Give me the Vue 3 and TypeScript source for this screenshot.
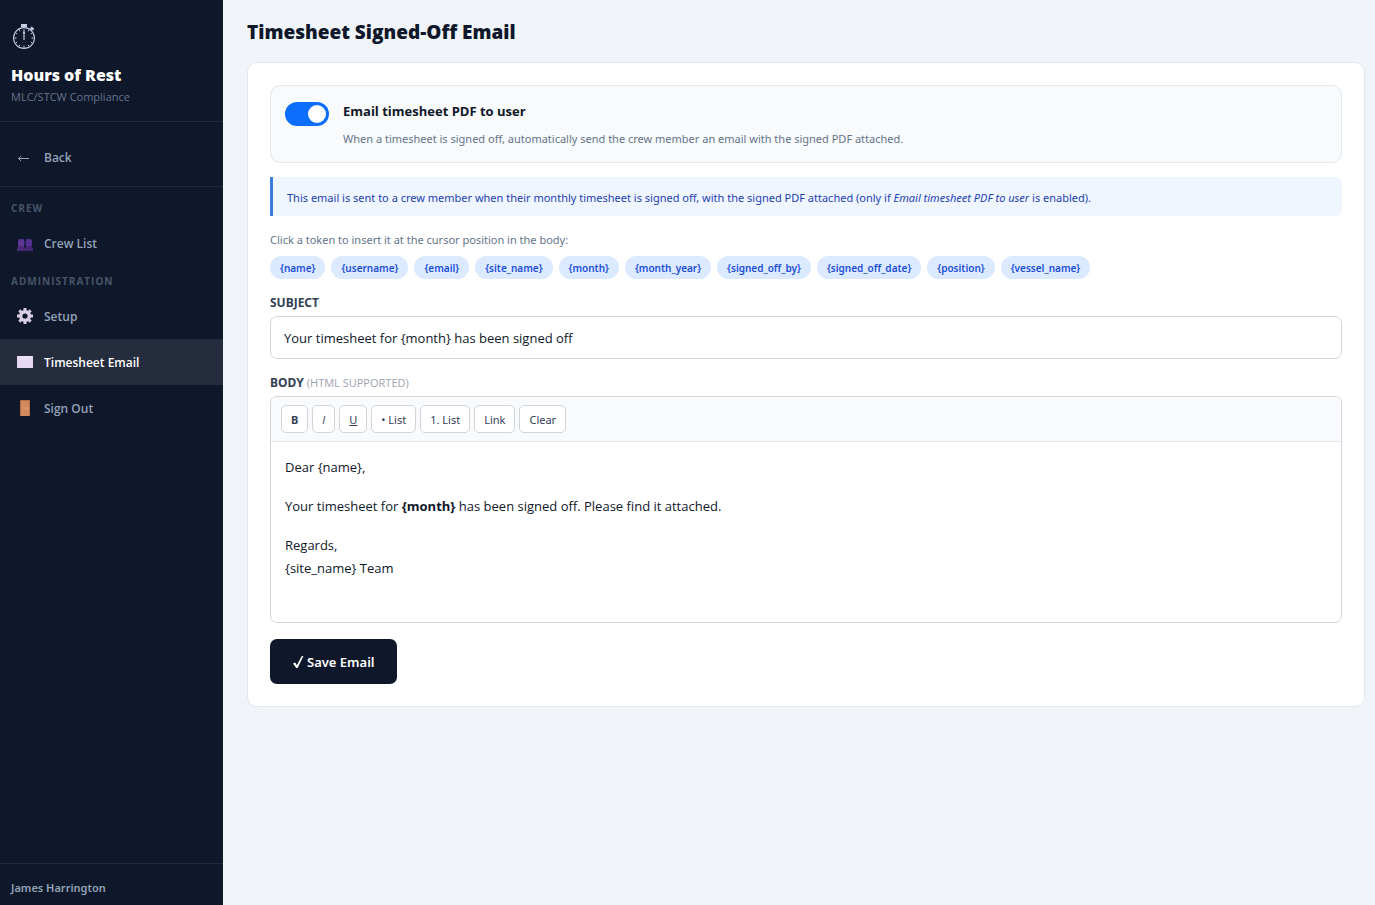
<script setup lang="ts">
import { ref } from 'vue'

interface Tool {
  label: string
  title: string
  command: string
  kind?: string
}

const sendPdf = ref(true)
const subject = ref('Your timesheet for {month} has been signed off')
const editor = ref<HTMLElement | null>(null)

const tokens: string[] = [
  '{name}',
  '{username}',
  '{email}',
  '{site_name}',
  '{month}',
  '{month_year}',
  '{signed_off_by}',
  '{signed_off_date}',
  '{position}',
  '{vessel_name}',
]

const tools: Tool[] = [
  { label: 'B', title: 'Bold', command: 'bold', kind: 'bold' },
  { label: 'I', title: 'Italic', command: 'italic', kind: 'italic' },
  { label: 'U', title: 'Underline', command: 'underline', kind: 'underline' },
  { label: '• List', title: 'Bulleted list', command: 'insertUnorderedList' },
  { label: '1. List', title: 'Numbered list', command: 'insertOrderedList' },
  { label: 'Link', title: 'Insert link', command: 'createLink' },
  { label: 'Clear', title: 'Clear formatting', command: 'removeFormat' },
]

function run(command: string, value?: string) {
  editor.value?.focus()
  document.execCommand(command, false, value)
}

function applyTool(tool: Tool) {
  if (tool.command === 'createLink') {
    const url = window.prompt('URL')
    if (url) run('createLink', url)
    return
  }
  run(tool.command)
}
</script>

<template>
  <div class="layout">
    <aside class="sidebar">
      <div class="brand">
        <svg class="brand-icon" viewBox="0 0 26 26" aria-hidden="true">
          <circle cx="13" cy="15" r="10.400" fill="none" stroke="#c3cde6" stroke-width="1.100" />
          <rect x="10" y="1" width="6" height="3" fill="#c3cde6" />
          <path d="M13 6.500V17" stroke="#c3cde6" stroke-width="1.200" />
          <circle cx="13" cy="9.800" r="1.100" fill="#c3cde6" />
          <path d="M19.600 7l2-2" stroke="#c3cde6" stroke-width="1.400" />
          <path d="M19.800 4.400l2.800 2.200" stroke="#c3cde6" stroke-width="2.400" />
          <path
            d="M13 22.500v2M3.500 15h2M20.500 15h2M8.200 6.800l.8 1.400M17 21.800l.8 1.400M17.800 6.800l-.8 1.400M9 21.800l-.8 1.400M4.800 10.200l1.400.8M19.800 19l1.400.8M21.200 10.200l-1.400.8M6.200 19l-1.400.8"
            stroke="#c3cde6"
            stroke-width="1"
          />
        </svg>
        <div class="brand-name">Hours of Rest</div>
        <div class="brand-sub">MLC/STCW Compliance</div>
      </div>

      <nav class="nav">
        <div class="nav-back">
          <a class="nav-item" href="#back">
            <svg class="nav-icon" viewBox="0 0 16 16" aria-hidden="true">
              <path d="M1.500 9.500H12M4.200 7L1.500 9.500 4.200 12" fill="none" stroke="#94a3b8" stroke-width="1" />
            </svg>
            <span>Back</span>
          </a>
        </div>

        <div class="nav-label">Crew</div>
        <a class="nav-item" href="#crew">
          <svg class="nav-icon" viewBox="0 0 16 16" aria-hidden="true">
            <rect x="1" y="4" width="6.400" height="8.500" rx="2.400" fill="#5f3696" />
            <rect x="8.600" y="4" width="6.400" height="8.500" rx="2.400" fill="#553090" />
            <path d="M0 16v-2.500q0-2 2-2h4q2 0 2 2V16z" fill="#4a2a78" />
            <path d="M8 16v-2.500q0-2 2-2h4q2 0 2 2V16z" fill="#432570" />
          </svg>
          <span>Crew List</span>
        </a>

        <div class="nav-label">Administration</div>
        <a class="nav-item" href="#setup">
          <svg class="nav-icon" viewBox="0 0 16 16" aria-hidden="true">
            <circle cx="8" cy="8" r="4.300" fill="none" stroke="#d9cfe6" stroke-width="3.400" />
            <path
              d="M8 0v3M8 13v3M0 8h3M13 8h3M2.340 2.340l2.100 2.100M11.560 11.560l2.100 2.100M13.660 2.340l-2.100 2.100M4.440 11.560l-2.100 2.100"
              stroke="#d9cfe6"
              stroke-width="3"
            />
          </svg>
          <span>Setup</span>
        </a>
        <a class="nav-item active" href="#timesheet-email" aria-current="page">
          <svg class="nav-icon" viewBox="0 0 16 16" aria-hidden="true">
            <rect x="0" y="2" width="16" height="12" rx="0.600" fill="#e6d8f2" />
            <path d="M0 2.300L8 8l8-5.700V2H0z" fill="#ece1f5" />
            <path d="M0.500 2.600L8 8l7.500-5.400" fill="none" stroke="#dccdea" stroke-width="0.500" />
          </svg>
          <span>Timesheet Email</span>
        </a>
        <a class="nav-item" href="#sign-out">
          <svg class="nav-icon" viewBox="0 0 16 16" aria-hidden="true">
            <rect x="3" y="0" width="10" height="16" rx="0.500" fill="#b8704a" />
            <rect x="4" y="1" width="8" height="15" fill="#d08a5c" />
            <path d="M5 8h5" stroke="#dfa06a" stroke-width="1" />
            <circle cx="10.800" cy="8.300" r="0.800" fill="#e8b060" />
          </svg>
          <span>Sign Out</span>
        </a>
      </nav>

      <div class="user">James Harrington</div>
    </aside>

    <main class="main">
      <h1 class="title">Timesheet Signed-Off Email</h1>

      <form class="card" @submit.prevent>
        <div class="toggle-box">
          <input id="send-pdf" v-model="sendPdf" class="switch" type="checkbox" role="switch" />
          <div>
            <label class="toggle-title" for="send-pdf">Email timesheet PDF to user</label>
            <div class="toggle-text">
              When a timesheet is signed off, automatically send the crew member an email with the signed PDF attached.
            </div>
          </div>
        </div>

        <div class="info">
          This email is sent to a crew member when their monthly timesheet is signed off, with the signed PDF attached
          (only if <em>Email timesheet PDF to user</em> is enabled).
        </div>

        <div class="hint">Click a token to insert it at the cursor position in the body:</div>
        <div class="tokens">
          <button
            v-for="token in tokens"
            :key="token"
            class="token"
            type="button"
            @mousedown.prevent
            @click="run('insertText', token)"
          >
            {{ token }}
          </button>
        </div>

        <label class="field-label" for="subject">Subject</label>
        <input id="subject" v-model="subject" class="subject" type="text" />

        <div id="body-label" class="field-label">Body <span class="note">(HTML supported)</span></div>
        <div class="editor">
          <div class="toolbar" role="toolbar" aria-label="Formatting">
            <button
              v-for="tool in tools"
              :key="tool.command"
              class="tool"
              :class="tool.kind"
              type="button"
              :title="tool.title"
              @mousedown.prevent
              @click="applyTool(tool)"
            >
              {{ tool.label }}
            </button>
          </div>
          <div
            ref="editor"
            class="editor-body"
            contenteditable="true"
            spellcheck="false"
            role="textbox"
            aria-multiline="true"
            aria-labelledby="body-label"
          >
            <p>Dear {name},</p>
            <p>Your timesheet for <strong>{month}</strong> has been signed off. Please find it attached.</p>
            <p>Regards,<br />{site_name} Team</p>
          </div>
        </div>

        <button class="save" type="submit">
          <svg class="check" viewBox="0 0 12 14" aria-hidden="true">
            <path d="M1 8.600l2.200-1 1.600 2.600L9.800 1h1.700L5.600 13H4.200z" fill="#ffffff" />
          </svg>
          <span>Save Email</span>
        </button>
      </form>
    </main>
  </div>
</template>

<style>
body {
  margin: 0;
  background: #f0f4f9;
}
</style>

<style scoped>
.layout {
  display: flex;
  min-height: 100vh;
  box-sizing: border-box;
  font-family: 'Open Sans', 'Noto Sans', sans-serif;
  font-size: 13px;
  color: #0f172a;
}

.layout *,
.layout *::before {
  box-sizing: border-box;
}

.layout button,
.layout input {
  font-family: inherit;
}

.sidebar {
  flex: none;
  display: flex;
  flex-direction: column;
  width: 223px;
  background: #0f172a;
  color: #94a3b8;
}

.brand {
  padding: 23px 11px 15px;
  border-bottom: 1px solid #1f2a3c;
}

.brand-icon {
  display: block;
  width: 26px;
  height: 26px;
}

.brand-name {
  margin-top: 15px;
  font-size: 16px;
  line-height: 22px;
  font-weight: 800;
  color: #ffffff;
}

.brand-sub {
  margin-top: 2px;
  font-size: 11px;
  line-height: 18px;
  color: #64748b;
}

.nav {
  flex: 1;
}

.nav-back {
  padding: 12px 0 6px;
  border-bottom: 1px solid #1f2a3c;
}

.nav-item {
  display: flex;
  align-items: center;
  gap: 11px;
  height: 46px;
  padding: 0 17px;
  font-size: 12px;
  font-weight: 600;
  color: #94a3b8;
  text-decoration: none;
}

.nav-item.active {
  background: #242c3d;
  color: #ffffff;
}

.nav-icon {
  flex: none;
  width: 16px;
  height: 16px;
}

.nav-label {
  padding: 8px 11px 5px;
  font-size: 10px;
  line-height: 14px;
  font-weight: 700;
  letter-spacing: 1px;
  text-transform: uppercase;
  color: #475569;
}

.nav-back + .nav-label {
  padding-top: 14px;
}

.user {
  padding: 15px 11px 8px;
  border-top: 1px solid #1f2a3c;
  font-family: 'Noto Sans', sans-serif;
  font-size: 11px;
  line-height: 18px;
  font-weight: 600;
}

.main {
  flex: 1;
  min-width: 0;
  padding: 18px 10px 24px 24px;
}

.title {
  margin: 0 0 16px;
  font-size: 19px;
  line-height: 28px;
  font-weight: 800;
}

.card {
  padding: 22px;
  border: 1px solid #e2e8f0;
  border-radius: 10px;
  background: #ffffff;
}

.toggle-box {
  display: flex;
  gap: 14px;
  padding: 14px;
  border: 1px solid #e2e8f0;
  border-radius: 10px;
  background: #f8fafc;
}

.switch {
  appearance: none;
  flex: none;
  width: 44px;
  height: 24px;
  margin: 2px 0 0;
  padding: 3px;
  border-radius: 12px;
  background: #cbd5e1;
  cursor: pointer;
}

.switch::before {
  content: '';
  display: block;
  width: 18px;
  height: 18px;
  border-radius: 50%;
  background: #ffffff;
}

.switch:checked {
  padding-left: 23px;
  background: #0d6efd;
}

.toggle-title {
  display: block;
  font-size: 13px;
  line-height: 22px;
  font-weight: 700;
}

.toggle-text,
.info,
.hint {
  font-family: 'Noto Sans', sans-serif;
  font-size: 11px;
  line-height: 19px;
  color: #64748b;
}

.toggle-text {
  margin-top: 7px;
}

.info {
  margin-top: 14px;
  padding: 11px 14px 9px;
  border-left: 3px solid #3b7ddd;
  border-radius: 0 6px 6px 0;
  background: #eff6ff;
  color: #1e40af;
}

.hint {
  margin-top: 14px;
}

.tokens {
  display: flex;
  flex-wrap: wrap;
  gap: 6px;
  margin: 7px 0 14px;
}

.layout .token {
  height: 23px;
  padding: 0 10px;
  border: 0;
  border-radius: 12px;
  background: #dbeafe;
  font-family: 'Noto Sans', sans-serif;
  font-size: 10px;
  font-weight: 600;
  color: #1d4ed8;
  cursor: pointer;
}

.field-label {
  display: block;
  margin-bottom: 3px;
  font-family: 'Noto Sans', sans-serif;
  font-size: 12px;
  line-height: 20px;
  font-weight: 700;
  text-transform: uppercase;
  color: #334155;
}

.note {
  font-family: 'Open Sans', sans-serif;
  font-size: 11px;
  font-weight: 400;
  color: #9ca3af;
}

.subject {
  display: block;
  width: 100%;
  height: 43px;
  margin-bottom: 14px;
  padding: 0 13px;
  border: 1px solid #d1d5db;
  border-radius: 7px;
  background: #ffffff;
  font-size: 13px;
  color: #0f172a;
}

.editor {
  overflow: hidden;
  border: 1px solid #d1d5db;
  border-radius: 7px;
}

.toolbar {
  display: flex;
  flex-wrap: wrap;
  gap: 4px;
  padding: 8px 10px;
  border-bottom: 1px solid #e2e8f0;
  background: #f8fafc;
}

.layout .tool {
  height: 28px;
  padding: 0 9px;
  border: 1px solid #d1d5db;
  border-radius: 5px;
  background: #ffffff;
  font-family: 'Noto Sans', sans-serif;
  font-size: 11px;
  color: #334155;
  cursor: pointer;
}

.layout .bold {
  font-weight: 700;
}

.layout .italic {
  font-family: 'Open Sans', sans-serif;
  font-style: italic;
}

.layout .underline {
  text-decoration: underline;
}

.editor-body {
  min-height: 180px;
  padding: 14px;
  font-size: 13px;
  line-height: 23px;
  outline: none;
}

.editor-body p {
  margin: 0 0 16px;
}

.layout .save {
  display: flex;
  align-items: center;
  gap: 3px;
  height: 45px;
  margin-top: 16px;
  padding: 0 22px;
  border: 0;
  border-radius: 7px;
  background: #0f172a;
  font-family: 'Noto Sans', sans-serif;
  font-size: 13px;
  font-weight: 600;
  color: #ffffff;
  cursor: pointer;
}

.check {
  width: 12px;
  height: 14px;
}
</style>
